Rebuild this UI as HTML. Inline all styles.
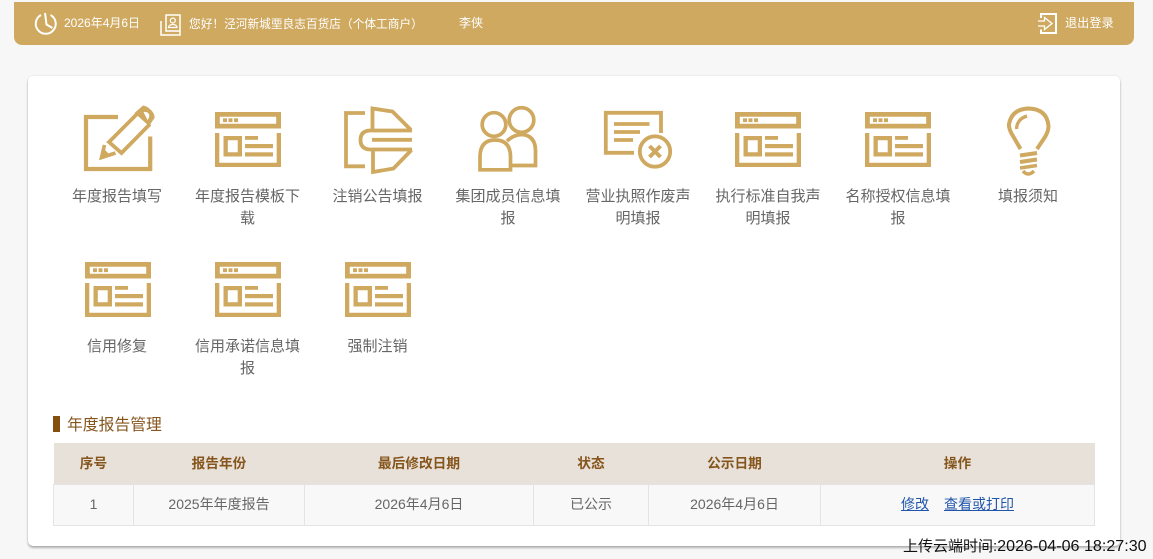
<!DOCTYPE html>
<html lang="zh"><head><meta charset="utf-8"><title>年度报告管理</title>
<style>
*{box-sizing:border-box}
html,body{margin:0;padding:0;width:1153px;height:559px;overflow:hidden;background:#f7f7f7;font-family:"Liberation Sans","Noto Sans CJK SC",sans-serif}
#hdr{position:absolute;left:14px;top:2px;width:1120px;height:43px;background:#cfa960;border-radius:0 0 8px 8px}
.h{position:absolute;top:15px;line-height:17px;font-size:12px;color:#fff;white-space:nowrap}
#card{position:absolute;left:28px;top:76px;width:1092px;height:470px;background:#fff;border-radius:5px;box-shadow:0 2px 2px rgba(0,0,0,.28),0 0 2px rgba(0,0,0,.1)}
.lb{position:absolute;width:130px;text-align:center;font-size:15px;line-height:22px;color:#666;white-space:nowrap}
svg{position:absolute;left:0;top:0;overflow:visible}
#ttl{position:absolute;left:67px;top:415px;font-size:15.8px;line-height:21px;color:#85551c;white-space:nowrap}
#bar{position:absolute;left:53px;top:416px;width:7px;height:16px;background:#85500f}
table{position:absolute;left:53px;top:443px;width:1042px;border-collapse:collapse;table-layout:fixed;font-size:14px}
th{height:41px;background:#e8e1da;color:#85551c;font-weight:bold;padding:0 0 2px;font-size:13.7px}
td{height:41px;background:#f8f8f8;border:1px solid #e4e4e4;color:#666;text-align:center;padding:0 0 2px}
a{color:#1f56ab;text-decoration:underline}
#up{position:absolute;left:903px;top:536px;font-size:15px;line-height:20px;color:#111;white-space:nowrap}
</style></head><body>
<div id="hdr"></div>
<div class="h" style="left:64px">2026年4月6日</div>
<div class="h" style="left:189px;font-size:11.7px;top:15.500px">您好！泾河新城垔良志百货店（个体工商户）</div>
<div class="h" style="left:459px">李侠</div>
<div class="h" style="left:1065px;font-size:12.2px">退出登录</div>
<div id="card"></div>

<svg width="1153" height="559" viewBox="0 0 1153 559" fill="none">
<defs>
<symbol id="tpl" viewBox="0 0 66 55" width="66" height="55" overflow="visible">
<g fill="#cfa960">
<path fill-rule="evenodd" d="M0 0H66V16.500H0ZM4.800 4.800V11.700H61.200V4.800Z"/>
<rect x="8" y="6.300" width="4" height="3.800"/><rect x="13.500" y="6.300" width="4" height="3.800"/><rect x="19" y="6.300" width="4" height="3.800"/>
<path d="M0 21H4.300V50.800H61.700V21H66V55H0Z"/>
<path fill-rule="evenodd" d="M8.500 24H27V44.500H8.500ZM12.800 28.300V40.200H22.700V28.300Z"/>
<rect x="30" y="24" width="13" height="3.800"/><rect x="30" y="32" width="28" height="4.200"/><rect x="30" y="40.300" width="28" height="4.200"/>
</g></symbol>
</defs>

<!-- header icons -->
<g stroke="#fff" stroke-width="2" fill="none">
<path d="M41 15A10 10 0 1 0 50.500 15"/><path d="M45 13L46.500 24.500L52.500 28" stroke-width="2"/>
<path d="M161 21V35H180V15H166V31H180" stroke-width="1.500"/>
<circle cx="172.800" cy="20.500" r="2.500" stroke-width="1.200"/><path d="M168.500 27.500Q169 24.500 172.800 24.500T177 27.500Z" stroke-width="1.200"/>
<path d="M1041 18V14H1056V33H1041V29.500"/>
<path d="M1038 21H1044.500V17.500L1052 23.500L1044.500 29.500V26H1038" stroke-width="1.300"/>
</g>

<!-- pencil -->
<g stroke="#cfa960" stroke-width="4.200" fill="none">
<path d="M118 117H86V169H150.200V136.500"/>
<path d="M138 113L109 142L121.500 153L150 124" stroke-width="3.800"/>
<path d="M104.500 145L101.500 157.500L115.500 153" stroke-width="3.600"/>
</g>
<path d="M99.500 160L103 148L111 156Z" fill="#cfa960"/>
<path fill-rule="evenodd" d="M134.500 113L143 105.500Q147 106 151 110Q155 114 154.500 118L149 126ZM143.500 112L147.500 120Q150 117 149 114Q147 111.500 143.500 112Z" fill="#cfa960"/>

<use href="#tpl" x="215" y="112"/>

<!-- cancel -->
<g stroke="#cfa960" stroke-width="3.800" fill="none">
<path d="M365 113H346V166.300H365"/>
<path d="M372.500 129V108.500L392.500 111.500L411 130"/>
<path d="M412 130.500H370Q360.500 131 360.500 140Q360.500 149 370 149.500H412"/>
<path d="M372 139.800H412"/>
<path d="M373 150V172L393.500 168.500L411.500 150"/>
</g>

<!-- group -->
<g stroke="#cfa960" stroke-width="3.700" fill="none">
<circle cx="521.500" cy="120" r="12.300"/>
<circle cx="494" cy="124.500" r="11.800"/>
<path d="M480 169.800V156Q480.500 140 495 140Q510 140 510.500 156V169.800Z"/>
<path d="M507 141Q514 134.500 522 134.500Q535 135.500 535.500 150V165.500H511"/>
</g>

<!-- invalid -->
<g stroke="#cfa960" fill="none">
<path d="M661 133V112.800H605.800V152.800H634" stroke-width="3.800"/>
<path d="M614 124H649.500M614 132H640M614 140H633" stroke-width="3.800"/>
<circle cx="655" cy="151.500" r="15.200" stroke-width="3.800"/>
<path d="M649.500 146L660.500 157M660.500 146L649.500 157" stroke-width="4"/>
</g>

<use href="#tpl" x="735" y="112"/>
<use href="#tpl" x="865" y="112"/>

<!-- bulb -->
<g stroke="#cfa960" stroke-width="4" fill="none">
<path d="M1020.500 149L1013 136Q1008.500 129 1009 124Q1012 109 1028.500 108.500Q1047 109 1048.500 126Q1048.500 131 1045 137L1037 149"/>
<path d="M1016.500 129Q1017 119 1027 116" stroke-width="3.300"/>
<path d="M1020 155.500L1037 153M1020 162L1037 159.500"/>
<path d="M1020 168L1037 165.500" stroke-width="3.500"/>
<path d="M1023 171Q1028 177 1034 171" stroke-width="3.600"/>
</g>

<use href="#tpl" x="85" y="262"/>
<use href="#tpl" x="215" y="262"/>
<use href="#tpl" x="345" y="262"/>
</svg>

<div class="lb" style="left:52px;top:186px">年度报告填写</div>
<div class="lb" style="left:182.500px;top:186px">年度报告模板下<br>载</div>
<div class="lb" style="left:312.500px;top:186px">注销公告填报</div>
<div class="lb" style="left:443px;top:186px">集团成员信息填<br>报</div>
<div class="lb" style="left:573px;top:186px">营业执照作废声<br>明填报</div>
<div class="lb" style="left:703px;top:186px">执行标准自我声<br>明填报</div>
<div class="lb" style="left:833px;top:186px">名称授权信息填<br>报</div>
<div class="lb" style="left:963px;top:186px">填报须知</div>
<div class="lb" style="left:52px;top:336px">信用修复</div>
<div class="lb" style="left:182.500px;top:336px">信用承诺信息填<br>报</div>
<div class="lb" style="left:312.500px;top:336px">强制注销</div>

<div id="bar"></div><div id="ttl">年度报告管理</div>
<table>
<colgroup><col style="width:80px"><col style="width:171px"><col style="width:229px"><col style="width:115px"><col style="width:172px"><col></colgroup>
<tr><th>序号</th><th>报告年份</th><th>最后修改日期</th><th>状态</th><th>公示日期</th><th>操作</th></tr>
<tr><td>1</td><td>2025年年度报告</td><td>2026年4月6日</td><td>已公示</td><td>2026年4月6日</td><td><a href="#">修改</a><span style="display:inline-block;width:15px"></span><a href="#">查看或打印</a></td></tr>
</table>
<div id="up">上传云端时间:<span style="font-size:16.100px">2026-04-06 18:27:30</span></div>
</body></html>
